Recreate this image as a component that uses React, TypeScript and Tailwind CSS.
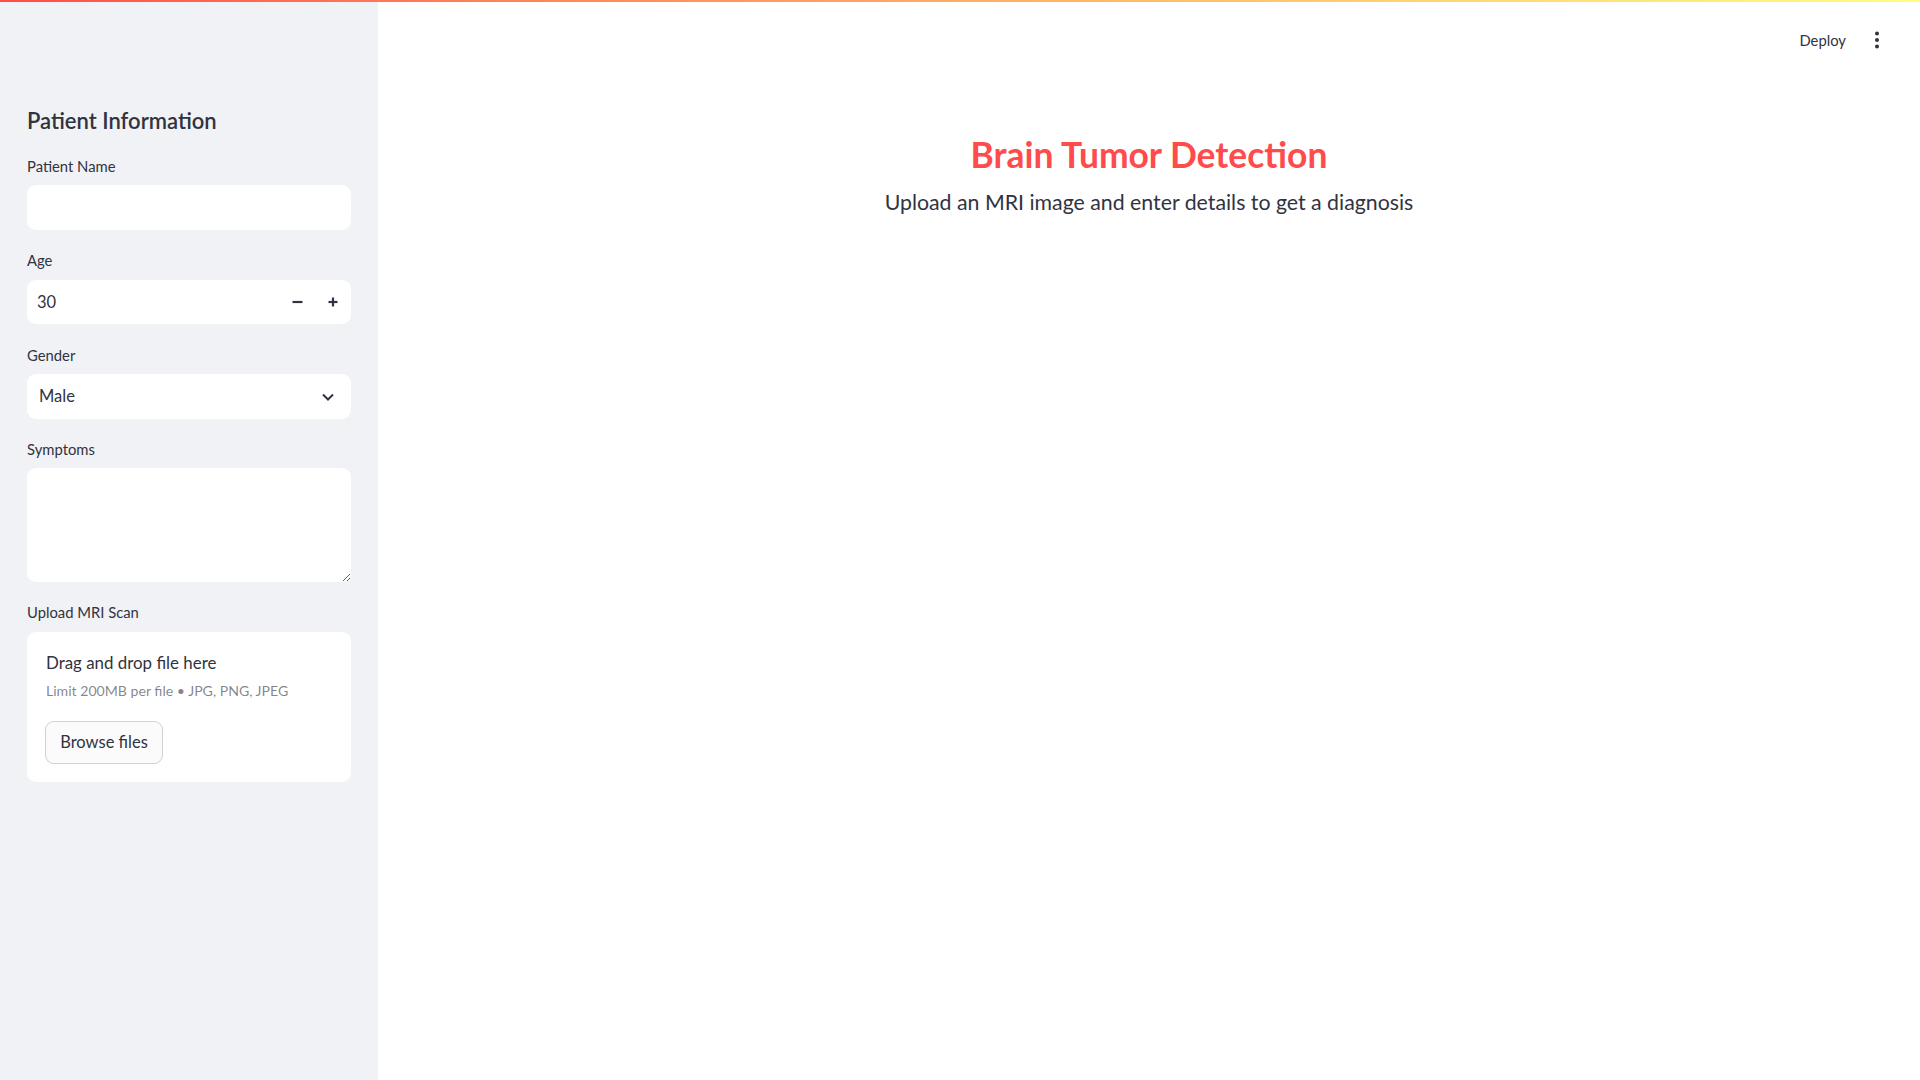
import { useState } from 'react'

const font = { fontFamily: 'Lato, "Noto Sans", sans-serif' }

function Label({ children, mt }: { children: React.ReactNode; mt: string }) {
  return <div className={`${mt} h-[20px] text-[14.8px] leading-[18px] text-[#31333f]`}>{children}</div>
}

export default function App() {
  const [age, setAge] = useState(30)

  return (
    <div style={font} className="relative flex min-h-screen w-full bg-white text-[#31333f]">
      {/* decoration bar */}
      <div className="absolute left-0 right-0 top-0 z-10 h-[2px] bg-gradient-to-r from-[#ff4b4b] to-[#fffd80]" />

      <aside className="flex min-h-screen w-[378px] shrink-0 flex-col bg-[#f0f2f6] px-[27px] pt-[105px]">
        <h2 className="h-[32px] text-[22px] font-semibold leading-[32px] text-[#31333f]">Patient Information</h2>

        <Label mt="mt-[20px]">Patient Name</Label>
        <input className="mt-[8px] h-[45px] w-full rounded-[9px] bg-white px-[13px] text-[16.5px] outline-none" />

        <Label mt="mt-[21px]">Age</Label>
        <div className="mt-[9px] flex h-[44px] w-full items-center rounded-[9px] bg-white">
          <input
            value={age}
            onChange={(e) => setAge(parseInt(e.target.value || '0', 10) || 0)}
            className="h-full min-w-0 flex-1 bg-transparent pl-[10px] text-[16.5px] outline-none"
          />
          <button type="button" onClick={() => setAge((v) => v - 1)} className="flex h-full w-[36px] items-center justify-center">
            <svg width="11" height="10" viewBox="0 0 11 10">
              <line x1="0.5" y1="5" x2="10.5" y2="5" stroke="#31333f" strokeWidth="2.2" />
            </svg>
          </button>
          <button type="button" onClick={() => setAge((v) => v + 1)} className="flex h-full w-[36px] items-center justify-center">
            <svg width="10" height="10" viewBox="0 0 10 10">
              <line x1="0.5" y1="5" x2="9.5" y2="5" stroke="#31333f" strokeWidth="2.2" />
              <line x1="5" y1="0.5" x2="5" y2="9.5" stroke="#31333f" strokeWidth="2.2" />
            </svg>
          </button>
        </div>

        <Label mt="mt-[22px]">Gender</Label>
        <div className="mt-[8px] flex h-[45px] w-full items-center justify-between rounded-[9px] bg-white pl-[12px] pr-[17px]">
          <span className="text-[16.5px]">Male</span>
          <svg width="12" height="8" viewBox="0 0 12 8">
            <polyline points="1,1.5 6,6.5 11,1.5" fill="none" stroke="#31333f" strokeWidth="2" />
          </svg>
        </div>

        <Label mt="mt-[21px]">Symptoms</Label>
        <textarea className="mt-[8px] h-[114px] w-full resize-y rounded-[9px] bg-white px-[13px] py-[10px] text-[16.5px] outline-none" />

        <Label mt="mt-[21px]">Upload MRI Scan</Label>
        <div className="mt-[9px] flex h-[150px] w-full flex-col rounded-[9px] bg-white pl-[19px] pt-[20px]">
          <div className="h-[22px] text-[16.9px] leading-[22px] text-[#31333f]">Drag and drop file here</div>
          <div className="mt-[8px] h-[18px] text-[14.1px] leading-[18px] text-[#31333f]/60">Limit 200MB per file • JPG, PNG, JPEG</div>
          <button
            type="button"
            className="ml-[-1px] mt-[21px] h-[43px] w-[118px] rounded-[9px] border border-[#31333f]/20 bg-[#fbfbfc] text-[16.5px] text-[#31333f]"
          >
            Browse files
          </button>
        </div>
      </aside>

      <main className="flex min-w-0 flex-1 flex-col">
        <header className="flex h-[80px] items-center justify-end pr-[27px]">
          <span className="text-[14.8px] text-[#31333f]">Deploy</span>
          <button type="button" className="ml-[15px] flex h-[32px] w-[32px] items-center justify-center">
            <svg width="6" height="18" viewBox="0 0 6 18">
              <circle cx="3" cy="2.5" r="2" fill="#31333f" />
              <circle cx="3" cy="9" r="2" fill="#31333f" />
              <circle cx="3" cy="15.5" r="2" fill="#31333f" />
            </svg>
          </button>
        </header>

        <div className="mt-[53px] flex flex-col items-center">
          <h1 className="h-[44px] text-[35.4px] font-bold leading-[44px] text-[#ff4b4b]">Brain Tumor Detection</h1>
          <p className="mt-[9px] h-[32px] text-[21.3px] leading-[32px] text-[#31333f]">
            Upload an MRI image and enter details to get a diagnosis
          </p>
        </div>
      </main>
    </div>
  )
}
